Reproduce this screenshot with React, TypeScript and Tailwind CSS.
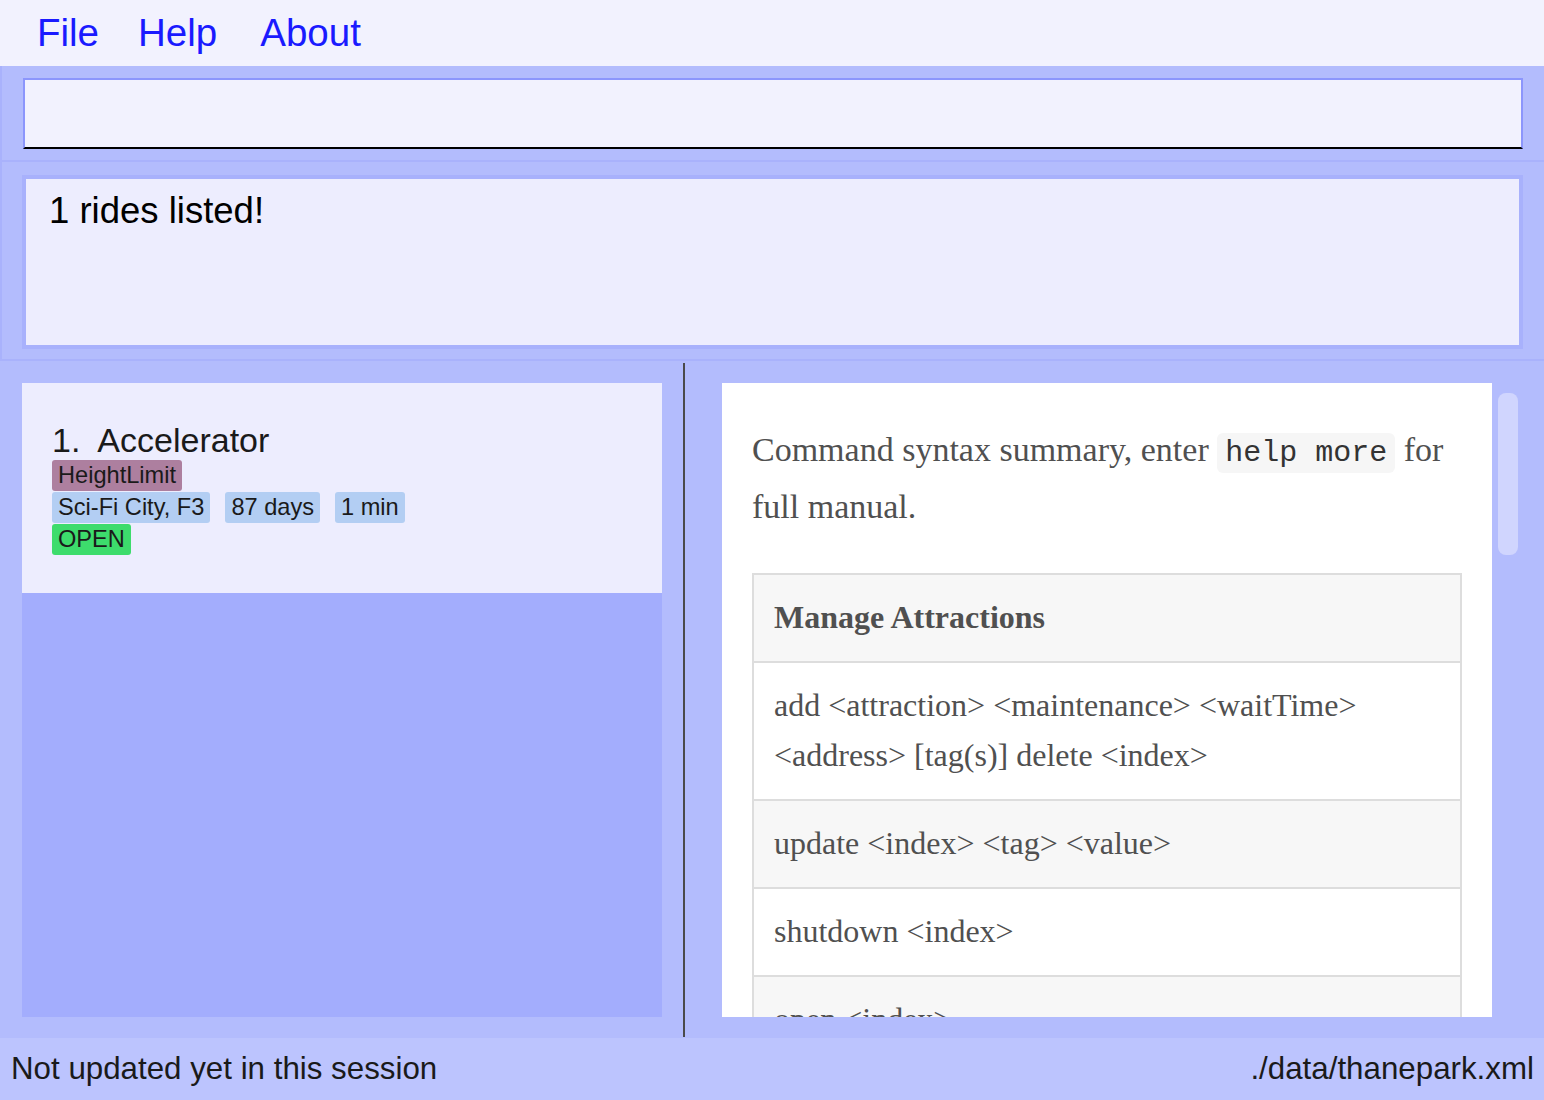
import React from "react";

const sans = { fontFamily: '"Liberation Sans", Arial, sans-serif' };

function Tag({ children, color }: { children: React.ReactNode; color: string }) {
  return (
    <span className={`inline-flex h-[31px] items-center rounded-[3px] px-[6px] text-[23.6px] leading-none text-[#1a1a1a] ${color}`}>
      {children}
    </span>
  );
}

export default function App() {
  const rows = [
    { text: <>add &lt;attraction&gt; &lt;maintenance&gt; &lt;waitTime&gt;<br />&lt;address&gt; [tag(s)] delete &lt;index&gt;</>, bg: "bg-white" },
    { text: <>update &lt;index&gt; &lt;tag&gt; &lt;value&gt;</>, bg: "bg-[#f7f7f7]" },
    { text: <>shutdown &lt;index&gt;</>, bg: "bg-white" },
    { text: <>open &lt;index&gt;</>, bg: "bg-[#f7f7f7]" },
    { text: <>clear</>, bg: "bg-white" },
  ];
  return (
    <div className="flex h-[1100px] w-[1544px] flex-col overflow-hidden bg-[#b3bcfd]" style={sans}>
      {/* menu bar */}
      <div className="flex h-[66px] shrink-0 items-center bg-[#f2f2fe] pl-[37px] text-[38.5px] text-[#1a1aff]">
        <span>File</span>
        <span className="ml-[39px]">Help</span>
        <span className="ml-[43px]">About</span>
      </div>

      {/* command box */}
      <div className="h-[94px] shrink-0 border-l-2 border-[#a9b2fc] bg-[#b3bcfd] pl-[21px] pr-[21px] pt-[12px]">
        <div className="h-[71px] w-[1500px] border-2 border-b-2 border-[#8c96fc] border-b-black bg-[#f2f2fe]" />
      </div>

      {/* result display */}
      <div className="h-[201px] shrink-0 border-y-2 border-l-2 border-[#a9b2fc] bg-[#b3bcfd] pl-[20px] pt-[13px]">
        <div className="h-[174px] w-[1501px] border-4 border-[#a8b1fc] bg-[#ededfe] pl-[23px] pt-[10px] text-[36.5px] leading-[44px] text-black">
          1 rides listed!
        </div>
      </div>

      {/* main */}
      <div className="flex h-[677px] shrink-0 bg-[#b3bcfd]">
        <div className="flex w-[683px] flex-col pl-[22px] pr-[21px] pt-[22px] pb-[20px]">
          <div className="flex h-[634px] flex-col bg-[#a3adfd]">
            <div className="flex h-[210px] flex-col bg-[#ededfe] pl-[30px] pt-[38px]">
              <div className="whitespace-pre text-[34px] leading-[38px] text-[#1a1a1a]">1.  Accelerator</div>
              <div className="mt-[1px] flex flex-col gap-[1px]">
                <div className="flex"><Tag color="bg-[#ad7f9f]">HeightLimit</Tag></div>
                <div className="flex gap-[15px]">
                  <Tag color="bg-[#b3cef3]">Sci-Fi City, F3</Tag>
                  <Tag color="bg-[#b3cef3]">87 days</Tag>
                  <Tag color="bg-[#b3cef3]">1 min</Tag>
                </div>
                <div className="flex"><Tag color="bg-[#3ddc6c]">OPEN</Tag></div>
              </div>
            </div>
          </div>
        </div>
        <div className="mt-[2px] h-[674px] w-[2px] bg-[#4a4a4a]" />
        <div className="flex flex-1 pl-[37px] pt-[22px]">
          <div
            className="h-[634px] w-[770px] overflow-hidden bg-white pl-[30px] pr-[30px] pt-[40px] text-[#505050]"
            style={{ fontFamily: '"Liberation Serif", "Times New Roman", serif' }}
          >
            <p className="whitespace-nowrap text-[34px] leading-[53px]">
              Command syntax summary, enter{" "}
              <code
                className="rounded-[6px] bg-[#f6f6f6] px-[8px] py-[3px] text-[30px] text-[#333]"
                style={{ fontFamily: '"Liberation Mono", "Courier New", monospace' }}
              >
                help more
              </code>{" "}
              for
              <br />
              full manual.
            </p>
            <div className="mt-[40px] w-[710px] border-2 border-[#dddddd]">
              <div className="border-b-2 border-[#dddddd] bg-[#f7f7f7] px-[20px] pt-[17px] pb-[19px] text-[32px] font-bold leading-[50px]">
                Manage Attractions
              </div>
              {rows.map((r, i) => (
                <div
                  key={i}
                  className={`whitespace-nowrap border-b-2 border-[#dddddd] px-[20px] pt-[17px] pb-[19px] text-[32px] leading-[50px] ${r.bg}`}
                >
                  {r.text}
                </div>
              ))}
            </div>
          </div>
          <div className="ml-[6px] mt-[10px] h-[162px] w-[20px] rounded-[8px] bg-[#d0d5fe]" />
        </div>
      </div>

      {/* status bar */}
      <div className="flex flex-1 items-center justify-between bg-[#bcc4fe] pl-[11px] pr-[10px] text-[31.3px] text-[#1a1a1a]">
        <span>Not updated yet in this session</span>
        <span>./data/thanepark.xml</span>
      </div>
    </div>
  );
}
